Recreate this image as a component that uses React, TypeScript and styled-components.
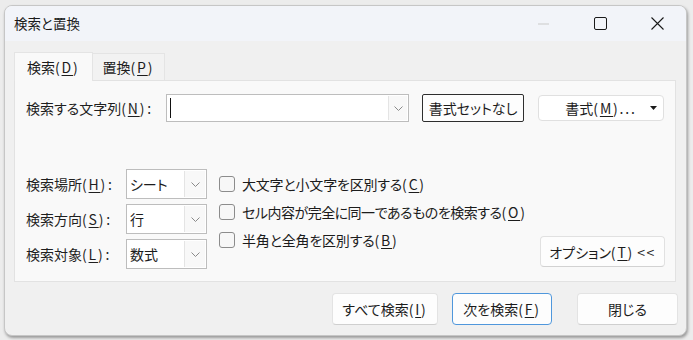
import React from 'react';
import styled, { createGlobalStyle } from 'styled-components';

const GlobalStyle = createGlobalStyle`
  html, body { margin: 0; padding: 0; background: #ececec; }
  body {
    font-family: "Noto Sans CJK JP", "Noto Sans", sans-serif;
    font-feature-settings: "palt";
    color: #1c1c1c;
  }
  * { box-sizing: border-box; }
`;

const Page = styled.div`
  width: 693px;
  height: 340px;
  padding: 5px 0 0 4px;
  overflow: hidden;
`;

const Window = styled.div`
  width: 683px;
  height: 331px;
  display: flex;
  flex-direction: column;
  background: #f0f0f0;
  border: 1px solid #c6c6c6;
  border-radius: 8px;
  overflow: hidden;
  box-shadow: 1px 2px 3px rgba(0, 0, 0, 0.35);
`;

const TitleBar = styled.div`
  height: 35px;
  flex: none;
  display: flex;
  align-items: center;
  padding-left: 9px;
  background: #f2f4f9;
`;

const Title = styled.div`
  font-size: 13.5px;
  line-height: 1;
  color: #1a1a1a;
`;

const Captions = styled.div`
  margin-left: auto;
  display: flex;
  height: 100%;
`;

const CaptionButton = styled.div`
  width: 57px;
  height: 100%;
  display: flex;
  align-items: center;
  justify-content: center;
`;

const Body = styled.div`
  flex: 1;
  display: flex;
  flex-direction: column;
  padding: 11px 8px 0 9px;
`;

const TabStrip = styled.div`
  display: flex;
  align-items: flex-end;
  height: 28px;
`;

const Tab = styled.div<{ $active?: boolean }>`
  position: relative;
  z-index: ${(p) => (p.$active ? 1 : 0)};
  height: ${(p) => (p.$active ? '29px' : '27px')};
  margin-bottom: ${(p) => (p.$active ? '-1px' : '0')};
  padding: 0 ${(p) => (p.$active ? '12px' : '10px')} ${(p) => (p.$active ? '1px' : '0')};
  display: flex;
  align-items: center;
  font-size: 14px;
  background: ${(p) => (p.$active ? '#f9f9f9' : '#f2f2f2')};
  border: 1px solid #e4e4e4;
  border-bottom: none;
  border-left: ${(p) => (p.$active ? '1px solid #e4e4e4' : 'none')};
`;

const Panel = styled.div`
  margin-right: 2px;
  background: #f9f9f9;
  border: 1px solid #e2e2e2;
  padding: 13px 10px 12px 11px;
  display: flex;
  flex-direction: column;
`;

const Row = styled.div`
  display: flex;
  align-items: center;
  height: 28px;
`;

const Label = styled.div<{ $width: number }>`
  width: ${(p) => p.$width}px;
  flex: none;
  font-size: 14px;
  white-space: nowrap;
  color: #1f1f1f;
`;

const Latin = styled.span`
  letter-spacing: 1.8px;
`;

const Colon = styled.span`
  margin-left: 1px;
`;

const Chevrons = styled.span`
  margin-left: 3px;
  letter-spacing: 1.5px;
`;

const U = styled.span`
  text-decoration: underline;
  text-underline-offset: 2px;
  text-decoration-thickness: 1px;
`;

const Combo = styled.div<{ $width: number; $height: number }>`
  width: ${(p) => p.$width}px;
  height: ${(p) => p.$height}px;
  flex: none;
  display: flex;
  background: #ffffff;
  border: 1px solid #bdbdbd;
`;

const ComboText = styled.div`
  flex: 1;
  display: flex;
  align-items: center;
  padding-left: 3px;
  font-size: 14px;
  white-space: nowrap;
`;

const Caret = styled.span`
  width: 1px;
  height: 20px;
  background: #111;
`;

const DropBox = styled.div<{ $width: number }>`
  width: ${(p) => p.$width}px;
  margin: 1px;
  display: flex;
  align-items: center;
  justify-content: center;
  background: #f8f8f8;
  border-left: 1px solid #e4e4e4;
`;

const NoFormatButton = styled.div`
  margin-left: 13px;
  width: 102px;
  height: 28px;
  flex: none;
  display: flex;
  align-items: center;
  justify-content: center;
  font-size: 14px;
  background: #fdfdfd;
  border: 1px solid #2e2e2e;
  border-radius: 2px;
`;

const FormatButton = styled.div`
  margin-left: 14px;
  width: 126px;
  height: 26px;
  flex: none;
  display: flex;
  align-items: center;
  font-size: 14px;
  background: #ffffff;
  border: 1px solid #e0e0e0;
  border-radius: 4px;
`;

const FormatText = styled.div`
  flex: 1;
  text-align: center;
  padding-left: 14px;
  white-space: nowrap;
`;

const FormatArrow = styled.div`
  width: 14px;
  display: flex;
  align-items: center;
  justify-content: flex-start;
  padding-left: 1px;
`;

const OptionArea = styled.div`
  margin-top: 47px;
  display: flex;
`;

const SelectGrid = styled.div`
  display: grid;
  grid-template-columns: 100px 81px;
  grid-auto-rows: 30px;
  row-gap: 5px;
  align-items: center;
`;

const Checks = styled.div`
  margin-left: 12px;
  padding-top: 1px;
  display: flex;
  flex-direction: column;
`;

const CheckRow = styled.div`
  height: 28px;
  display: flex;
  align-items: center;
  gap: 7px;
  font-size: 14px;
  white-space: nowrap;
`;

const CheckText = styled.span<{ $tight?: boolean }>`
  letter-spacing: ${(p) => (p.$tight ? '-0.5px' : '-0.2px')};
`;

const Box = styled.span`
  width: 16px;
  height: 16px;
  flex: none;
  border: 1px solid #8c8c8c;
  border-radius: 3px;
  background: #f7f7f7;
`;

const OptionsButton = styled.div`
  margin-left: auto;
  align-self: flex-end;
  margin-bottom: 2px;
  width: 125px;
  height: 31px;
  display: flex;
  align-items: center;
  justify-content: center;
  font-size: 14px;
  white-space: nowrap;
  background: #fdfdfd;
  border: 1px solid #e1e1e1;
  border-bottom-color: #d2d2d2;
  border-radius: 4px;
`;

const Footer = styled.div`
  margin-top: 11px;
  display: flex;
  justify-content: flex-end;
`;

const Button = styled.div<{ $width: number; $gap?: number; $primary?: boolean }>`
  width: ${(p) => p.$width}px;
  margin-left: ${(p) => p.$gap ?? 0}px;
  height: 32px;
  display: flex;
  align-items: center;
  justify-content: center;
  font-size: 14px;
  white-space: nowrap;
  background: #fdfdfd;
  border: 1px solid ${(p) => (p.$primary ? '#4f97dc' : '#e3e3e3')};
  border-bottom-color: ${(p) => (p.$primary ? '#4f97dc' : '#cfcfcf')};
  border-radius: 4px;
`;

const Key = ({ k, colon }: { k: string; colon?: boolean }) => (
  <Latin>
    (<U>{k}</U>){colon ? <Colon>:</Colon> : null}
  </Latin>
);

const Chevron = () => (
  <svg width="9" height="5" viewBox="0 0 9 5">
    <path d="M0.5 0.5 L4.5 4.5 L8.5 0.5" fill="none" stroke="#8a8a8a" strokeWidth="1" />
  </svg>
);

const Select = ({ value }: { value: string }) => (
  <Combo $width={81} $height={30}>
    <ComboText>{value}</ComboText>
    <DropBox $width={21}>
      <Chevron />
    </DropBox>
  </Combo>
);

export default function App() {
  return (
    <>
      <GlobalStyle />
      <Page>
        <Window>
          <TitleBar>
            <Title>検索と置換</Title>
            <Captions>
              <CaptionButton>
                <svg width="11" height="2" viewBox="0 0 11 2">
                  <rect x="0" y="0.5" width="11" height="1" fill="#c9c9c9" />
                </svg>
              </CaptionButton>
              <CaptionButton>
                <svg width="13" height="13" viewBox="0 0 13 13">
                  <rect x="0.5" y="0.5" width="12" height="12" rx="1.5" fill="none" stroke="#1a1a1a" strokeWidth="1" />
                </svg>
              </CaptionButton>
              <CaptionButton>
                <svg width="13" height="13" viewBox="0 0 13 13">
                  <path d="M0.5 0.5 L12.5 12.5 M12.5 0.5 L0.5 12.5" stroke="#1a1a1a" strokeWidth="1.1" />
                </svg>
              </CaptionButton>
            </Captions>
          </TitleBar>
          <Body>
            <TabStrip>
              <Tab $active>
                検索<Key k="D" />
              </Tab>
              <Tab>
                置換<Key k="P" />
              </Tab>
            </TabStrip>
            <Panel>
              <Row>
                <Label $width={140}>
                  検索する文字列<Key k="N" colon />
                </Label>
                <Combo $width={243} $height={28}>
                  <ComboText>
                    <Caret />
                  </ComboText>
                  <DropBox $width={19}>
                    <Chevron />
                  </DropBox>
                </Combo>
                <NoFormatButton>書式セットなし</NoFormatButton>
                <FormatButton>
                  <FormatText>
                    書式<Key k="M" />
                    <Latin>...</Latin>
                  </FormatText>
                  <FormatArrow>
                    <svg width="7" height="4" viewBox="0 0 7 4">
                      <path d="M0 0 L7 0 L3.5 4 Z" fill="#1a1a1a" />
                    </svg>
                  </FormatArrow>
                </FormatButton>
              </Row>
              <OptionArea>
                <SelectGrid>
                  <Label $width={100}>
                    検索場所<Key k="H" colon />
                  </Label>
                  <Select value="シート" />
                  <Label $width={100}>
                    検索方向<Key k="S" colon />
                  </Label>
                  <Select value="行" />
                  <Label $width={100}>
                    検索対象<Key k="L" colon />
                  </Label>
                  <Select value="数式" />
                </SelectGrid>
                <Checks>
                  <CheckRow>
                    <Box />
                    <CheckText>
                      大文字と小文字を区別する<Key k="C" />
                    </CheckText>
                  </CheckRow>
                  <CheckRow>
                    <Box />
                    <CheckText $tight>
                      セル内容が完全に同一であるものを検索する<Key k="O" />
                    </CheckText>
                  </CheckRow>
                  <CheckRow>
                    <Box />
                    <CheckText>
                      半角と全角を区別する<Key k="B" />
                    </CheckText>
                  </CheckRow>
                </Checks>
                <OptionsButton>
                  オプション<Key k="T" />
                  <Chevrons>&lt;&lt;</Chevrons>
                </OptionsButton>
              </OptionArea>
            </Panel>
            <Footer>
              <Button $width={106}>
                すべて検索<Key k="I" />
              </Button>
              <Button $width={100} $gap={14} $primary>
                次を検索<Key k="F" />
              </Button>
              <Button $width={101} $gap={25}>
                閉じる
              </Button>
            </Footer>
          </Body>
        </Window>
      </Page>
    </>
  );
}
